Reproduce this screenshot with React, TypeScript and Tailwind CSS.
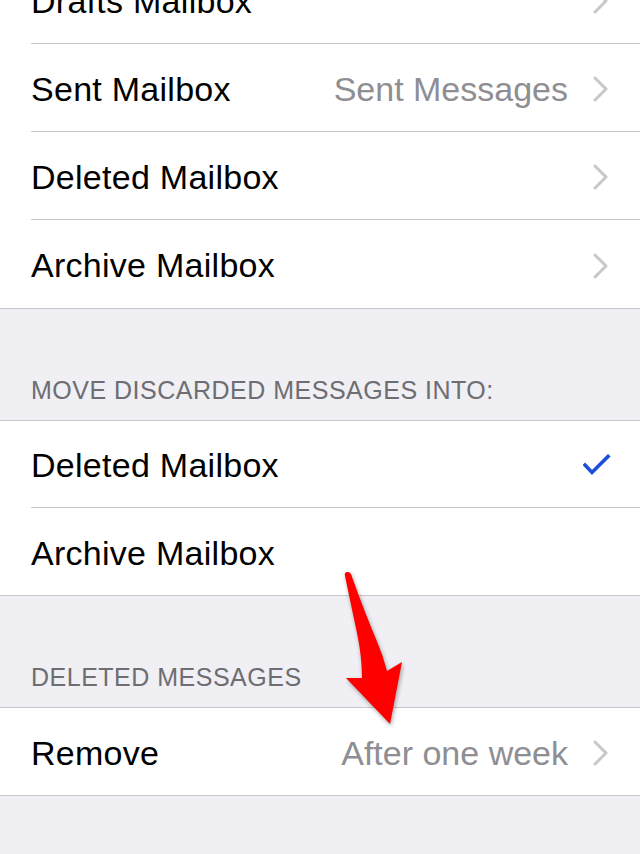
import React from "react";

const font = { fontFamily: '"Liberation Sans", Arial, sans-serif' };

function Chevron() {
  return (
    <svg width="16" height="26" viewBox="0 0 16 26" className="shrink-0">
      <polyline points="2,2 13,13 2,24" fill="none" stroke="#c7c7cc" strokeWidth="3" strokeLinecap="round" strokeLinejoin="round" />
    </svg>
  );
}

function Check() {
  return (
    <svg width="28" height="22" viewBox="0 0 28 22" className="shrink-0">
      <polyline points="2,11 9,18.5 25,2.5" fill="none" stroke="#1a4fdc" strokeWidth="3.6" strokeLinecap="square" />
    </svg>
  );
}

type Row = { label: string; value?: string; accessory?: "chevron" | "check" | "none" };

function Group({ rows }: { rows: Row[] }) {
  return (
    <div className="border-y border-[#c8c7cc] bg-white">
      {rows.map((row, i) => (
        <div key={row.label + i} className="pl-[31px]">
          <div
            className={
              "flex h-[87px] items-center pt-[3px] pr-[31px] " +
              (i < rows.length - 1 ? "border-b border-[#c8c7cc]" : "")
            }
          >
            <span className="flex-1 text-[34px] tracking-[0.008em] text-black">{row.label}</span>
            {row.value ? (
              <span className="mr-[25px] text-[34px] text-[#8e8e93]">{row.value}</span>
            ) : null}
            {row.accessory === "chevron" && <Chevron />}
            {row.accessory === "check" && (
              <span className="-mr-[2px] -mt-[2px]">
                <Check />
              </span>
            )}
          </div>
        </div>
      ))}
    </div>
  );
}

function SectionHeader({ title }: { title?: string }) {
  return (
    <div className="flex h-[111px] items-end px-[31px] pb-[15px]">
      {title ? (
        <span className="text-[25px] leading-[30px] tracking-[0.02em] text-[#6d6d72]">{title}</span>
      ) : null}
    </div>
  );
}

export default function App() {
  return (
    <div className="relative h-[854px] w-[640px] overflow-hidden bg-[#efeff4]" style={font}>
      <div className="-mt-[44px]">
        <div className="border-b border-[#c8c7cc] bg-white">
          {[
            { label: "Drafts Mailbox" },
            { label: "Sent Mailbox", value: "Sent Messages" },
            { label: "Deleted Mailbox" },
            { label: "Archive Mailbox" },
          ].map((row, i, arr) => (
            <div key={row.label} className="pl-[31px]">
              <div
                className={
                  "flex h-[88px] items-center pt-[3px] pr-[31px] " +
                  (i < arr.length - 1 ? "border-b border-[#c8c7cc]" : "")
                }
              >
                <span className="flex-1 text-[34px] tracking-[0.008em] text-black">{row.label}</span>
                {row.value ? (
                  <span className="mr-[25px] text-[34px] text-[#8e8e93]">{row.value}</span>
                ) : null}
                <Chevron />
              </div>
            </div>
          ))}
        </div>

        <SectionHeader title="MOVE DISCARDED MESSAGES INTO:" />
        <Group
          rows={[
            { label: "Deleted Mailbox", accessory: "check" },
            { label: "Archive Mailbox", accessory: "none" },
          ]}
        />

        <SectionHeader title="DELETED MESSAGES" />
        <Group rows={[{ label: "Remove", value: "After one week", accessory: "chevron" }]} />
      </div>

      {/* red annotation arrow */}
      <svg
        width="90"
        height="170"
        viewBox="0 0 90 170"
        className="absolute left-[330px] top-[565px] drop-shadow-[1px_2px_2px_rgba(0,0,0,0.35)]"
      >
        <path
          d="M15 11 Q14 7 17.5 7 Q21 7 22 12 Q35 48 46 74 Q53 90 57 106 L72 97 L60 159 L16 113 L32 113 Q32 92 27 68 Q21 40 15 11 Z"
          fill="#ff0000"
        />
      </svg>
    </div>
  );
}
